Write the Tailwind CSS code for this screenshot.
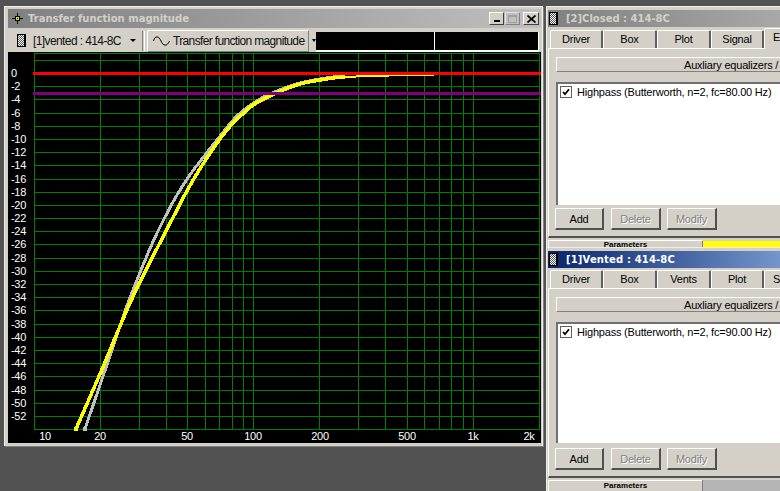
<!DOCTYPE html>
<html lang="en">
<head>
    <meta charset="UTF-8">
    <title>Transfer function magnitude</title>
    <script src="https://cdn.jsdelivr.net/npm/@tailwindcss/browser@4"></script>
</head>
<body class="relative w-[780px] h-[491px] overflow-hidden bg-[#525252] font-['Liberation_Sans',Arial,sans-serif] text-[11px] tracking-[-0.2px] leading-none text-black">

<!-- graph window -->
<div class="absolute left-[4px] top-[6px] w-[539px] h-[440px] flex flex-col bg-[#d4d0c8] pt-[2px] pl-[3px] pr-[1px] border-t border-l border-r border-[#f0eee8] shadow-[1px_1px_0_#808080]">
    <div class="h-[19px] flex items-center bg-gradient-to-r from-[#808080] to-[#c0c0c0]">
        <svg class="ml-[4px] w-[11px] h-[11px] shrink-0" viewBox="0 0 11 11" shape-rendering="crispEdges"><path d="M5 0h1v11H5zM0 5h11v1H0z" fill="#000"/><path d="M3 3h5v5H3z" fill="#000"/><path d="M4 4h3v3H4z" fill="#e8e800"/><path d="M5 5h1v1H5z" fill="#000"/></svg>
        <span class="ml-[5px] font-['DejaVu_Sans',sans-serif] font-bold text-[10px] tracking-normal text-[#d4d0c8]">Transfer function magnitude</span>
        <div class="ml-auto mr-[2px] flex">
            <div class="w-[15px] h-[13px] flex items-end justify-center pb-[2px] bg-[#d4d0c8] border-t border-l border-white border-r-[#404040] border-b-[#404040] border-r border-b"><div class="w-[6px] h-[2px] bg-black"></div></div>
            <div class="ml-[1px] w-[15px] h-[13px] flex items-center justify-center bg-[#c0c0c0] border-t border-l border-[#e0e0e0] border-r-[#808080] border-b-[#808080] border-r border-b"><div class="w-[9px] h-[8px] border border-t-2 border-[#a0a0a0]"></div></div>
            <div class="ml-[3px] w-[16px] h-[13px] flex items-center justify-center bg-[#d4d0c8] border-t border-l border-white border-r-[#404040] border-b-[#404040] border-r border-b">
                <svg class="w-[9px] h-[8px]" viewBox="0 0 9 8"><path d="M0.5 0.5L8.5 7.5M8.5 0.5L0.5 7.5" stroke="#000" stroke-width="1.7"/></svg>
            </div>
        </div>
    </div>
    <div class="h-[23px] mt-[1px] flex items-center text-[#111]">
        <svg class="ml-[9px] w-[9px] h-[13px] shrink-0" viewBox="0 0 9 13" shape-rendering="crispEdges">
            <defs><pattern id="chk1" width="2" height="2" patternUnits="userSpaceOnUse"><rect width="2" height="2" fill="#fff"/><rect width="1" height="1" fill="#555"/><rect x="1" y="1" width="1" height="1" fill="#555"/></pattern></defs>
            <rect width="9" height="13" fill="#000"/><rect x="1" y="1" width="6" height="11" fill="url(#chk1)"/>
        </svg>
        <span class="ml-[7px] w-[91px] text-[12px] tracking-[-0.6px] whitespace-nowrap">[1]vented : 414-8C</span>
        <div class="ml-[6px] w-0 h-0 border-x-[3px] border-x-transparent border-t-[3px] border-t-black"></div>
        <div class="ml-[6px] w-[3px] h-[20px] border-l border-r border-l-[#808080] border-r-white"></div>
        <div class="ml-[2px] w-[162px] h-[22px] flex items-center border-t border-l border-white border-r border-b border-r-[#808080] border-b-[#808080]">
            <svg class="ml-[5px] w-[17px] h-[10px] shrink-0" viewBox="0 0 17 10"><path d="M0.5 5C2 -1 6 0 8 5S14 11 16.5 5" fill="none" stroke="#000"/></svg>
            <span class="ml-[3px] text-[12px] tracking-[-0.65px] whitespace-nowrap">Transfer function magnitude</span>
        </div>
        <div class="ml-[3px] w-0 h-0 border-x-[2px] border-x-transparent border-t-[3px] border-t-black"></div>
        <div class="mt-[3px] flex-1 h-[20px] mr-[2px] flex bg-black border-r border-b-2 border-white">
            <div class="w-[119px] border-r border-white"></div>
        </div>
    </div>
    <svg id="plot" class="block w-[533px] h-[391px] shrink-0 bg-black" viewBox="8 52 533 391" font-size="11" letter-spacing="-0.3" fill="#fff">
        <path id="grid" fill="none" stroke="#008000" shape-rendering="crispEdges"/>
        <g id="labels"></g>
        <g shape-rendering="crispEdges" fill="none" stroke-linejoin="round">
            <rect x="83" y="427" width="4" height="4" fill="#c0c0c0"/>
            <rect x="74" y="427" width="4" height="4" fill="#ff0"/>
            <path id="gray" stroke="#c0c0c0" stroke-width="3"/>
            <path id="yellow" stroke="#ff0" stroke-width="3.5"/>
            <polyline stroke="#ff0" stroke-width="2" points="345,77 367,76 389,76"/>
            <polyline stroke="#ff0" stroke-width="1" points="389,75.5 434,75.5"/>
            <rect x="33" y="72" width="508" height="3" fill="#f00"/>
            <rect x="33" y="92" width="508" height="3" fill="#800080"/>
        </g>
    </svg>
</div>

<!-- closed box window -->
<div class="absolute left-[546px] top-[6px] w-[234px] h-[241px] overflow-hidden bg-[#d4d0c8] pt-[3px] pl-[1px] border-t border-l border-[#f0eee8]">
    <div class="h-[17px] flex items-center bg-gradient-to-r from-[#808080] to-[#a8a8a8]">
        <svg class="w-[9px] h-[13px] ml-[1px] shrink-0" viewBox="0 0 9 13" shape-rendering="crispEdges">
            <rect width="9" height="13" fill="#000"/><rect x="1" y="1" width="6" height="11" fill="url(#chk1)"/>
        </svg>
        <span class="ml-[8px] font-['DejaVu_Sans',sans-serif] font-bold text-[10px] tracking-normal text-[#d4d0c8] whitespace-nowrap">[2]Closed : 414-8C</span>
    </div>
    <div class="h-[21px] flex items-end pl-[2px]">
        <div class="w-[53px] h-[18px] shrink-0 flex items-center justify-center rounded-t-[2px] border-t border-l border-white border-r-2 border-r-[#606060]">Driver</div>
        <div class="w-[54px] h-[18px] shrink-0 flex items-center justify-center rounded-t-[2px] border-t border-l border-white border-r-2 border-r-[#606060]">Box</div>
        <div class="w-[54px] h-[18px] shrink-0 flex items-center justify-center rounded-t-[2px] border-t border-l border-white border-r-2 border-r-[#606060]">Plot</div>
        <div class="w-[53px] h-[18px] shrink-0 flex items-center justify-center rounded-t-[2px] border-t border-l border-white border-r-2 border-r-[#606060]">Signal</div>
        <div class="relative z-10 w-[60px] h-[21px] shrink-0 -mb-[1px] flex items-center pl-[8px] pb-[3px] rounded-t-[2px] border-t border-l border-white bg-[#d4d0c8]">EQ</div>
    </div>
    <div class="h-[190px] border-t border-l border-white border-b-2 border-b-[#505050] pl-[7px]">
        <div class="mt-[8px] h-[15px] pl-[127px] pt-[2px] flex items-center whitespace-nowrap border-t border-l border-white border-b border-b-[#808080]">Auxliary equalizers /</div>
        <div class="mt-[10px] h-[123px] bg-white border-t-2 border-l-2 border-[#707070] pl-[2px] pt-[2px] flex items-start">
            <div class="w-[12px] h-[12px] bg-white border border-[#606060] flex items-center justify-center">
                <svg class="w-[8px] h-[8px]" viewBox="0 0 8 8"><path d="M1 4L3 6.2L7 1.2" fill="none" stroke="#000" stroke-width="1.8"/></svg>
            </div>
            <span class="ml-[5px] mt-[1px] whitespace-nowrap">Highpass (Butterworth, n=2, fc=80.00 Hz)</span>
        </div>
        <div class="mt-[3px] flex -ml-[1px]">
            <div class="w-[49px] h-[22px] pt-[2px] flex items-center justify-center border-t border-l border-white border-r-2 border-b-2 border-r-[#505050] border-b-[#505050]">Add</div>
            <div class="ml-[7px] w-[50px] h-[22px] pt-[2px] flex items-center justify-center text-[#808080] [text-shadow:1px_1px_0_#fff] border-t border-l border-white border-r-2 border-b-2 border-r-[#505050] border-b-[#505050]">Delete</div>
            <div class="ml-[6px] w-[50px] h-[22px] pt-[2px] flex items-center justify-center text-[#808080] [text-shadow:1px_1px_0_#fff] border-t border-l border-white border-r-2 border-b-2 border-r-[#505050] border-b-[#505050]">Modify</div>
        </div>
    </div>
    <div class="mt-[2px] h-[8px] flex overflow-hidden">
        <div class="w-[154px] text-center font-bold text-[8px] tracking-normal border-t border-l border-white">Parameters</div>
        <div class="flex-1 mt-[1px] bg-[#ff0] border-l border-[#808080]"></div>
    </div>
</div>

<!-- vented box window (active) -->
<div class="absolute left-[546px] top-[247px] w-[234px] h-[244px] overflow-hidden bg-[#d4d0c8] pt-[3px] pl-[1px] border-t border-l border-[#f0eee8]">
    <div class="h-[17px] flex items-center bg-gradient-to-r from-[#0a246a] to-[#7596cb]">
        <svg class="w-[9px] h-[13px] ml-[1px] shrink-0" viewBox="0 0 9 13" shape-rendering="crispEdges">
            <rect width="9" height="13" fill="#000"/><rect x="1" y="1" width="6" height="11" fill="url(#chk1)"/>
        </svg>
        <span class="ml-[8px] font-['DejaVu_Sans',sans-serif] font-bold text-[10px] tracking-[0.15px] text-white whitespace-nowrap">[1]Vented : 414-8C</span>
    </div>
    <div class="h-[20px] flex items-end pl-[2px]">
        <div class="w-[53px] h-[18px] shrink-0 flex items-center justify-center rounded-t-[2px] border-t border-l border-white border-r-2 border-r-[#606060]">Driver</div>
        <div class="w-[54px] h-[18px] shrink-0 flex items-center justify-center rounded-t-[2px] border-t border-l border-white border-r-2 border-r-[#606060]">Box</div>
        <div class="w-[54px] h-[18px] shrink-0 flex items-center justify-center rounded-t-[2px] border-t border-l border-white border-r-2 border-r-[#606060]">Vents</div>
        <div class="w-[53px] h-[18px] shrink-0 flex items-center justify-center rounded-t-[2px] border-t border-l border-white border-r-2 border-r-[#606060]">Plot</div>
        <div class="w-[60px] h-[18px] shrink-0 flex items-center pl-[8px] rounded-t-[2px] border-t border-l border-white">Signal</div>
    </div>
    <div class="h-[190px] border-t border-l border-white border-b-2 border-b-[#505050] pl-[7px]">
        <div class="mt-[8px] h-[15px] pl-[127px] pt-[2px] flex items-center whitespace-nowrap border-t border-l border-white border-b border-b-[#808080]">Auxliary equalizers /</div>
        <div class="mt-[10px] h-[121px] bg-white border-t-2 border-l-2 border-[#707070] pl-[2px] pt-[2px] flex items-start">
            <div class="w-[12px] h-[12px] bg-white border border-[#606060] flex items-center justify-center">
                <svg class="w-[8px] h-[8px]" viewBox="0 0 8 8"><path d="M1 4L3 6.2L7 1.2" fill="none" stroke="#000" stroke-width="1.8"/></svg>
            </div>
            <span class="ml-[5px] mt-[1px] whitespace-nowrap">Highpass (Butterworth, n=2, fc=90.00 Hz)</span>
        </div>
        <div class="mt-[5px] flex -ml-[1px]">
            <div class="w-[49px] h-[22px] pt-[2px] flex items-center justify-center border-t border-l border-white border-r-2 border-b-2 border-r-[#505050] border-b-[#505050]">Add</div>
            <div class="ml-[7px] w-[50px] h-[22px] pt-[2px] flex items-center justify-center text-[#808080] [text-shadow:1px_1px_0_#fff] border-t border-l border-white border-r-2 border-b-2 border-r-[#505050] border-b-[#505050]">Delete</div>
            <div class="ml-[6px] w-[50px] h-[22px] pt-[2px] flex items-center justify-center text-[#808080] [text-shadow:1px_1px_0_#fff] border-t border-l border-white border-r-2 border-b-2 border-r-[#505050] border-b-[#505050]">Modify</div>
        </div>
    </div>
    <div class="mt-[2px] h-[12px] flex">
        <div class="w-[154px] text-center font-bold text-[8px] tracking-normal leading-[10px] border-t border-l border-white">Parameters</div>
        <div class="flex-1 bg-[#b4b4b4] border-l border-[#808080]"></div>
    </div>
</div>

<script>
    // grid and axis labels, in page coordinates (viewBox of the svg starts at 8,52)
    const freqs = [10,20,30,40,50,60,70,80,90,100,200,300,400,500,600,700,800,900,1000,2000]
    const fx = (f)=> Math.round(34 + 219.3*Math.log10(f/10))
    const dy = (d)=> Math.round(73 - 6.596*d)
    let d = ''
    freqs.forEach((f)=>{ d += `M${fx(f)+0.5} 53V429` })
    d += 'M34 53.5H540'
    for(let db=2; db>=-54; db-=2){ d += `M34 ${dy(db)+0.5}H540` }
    document.querySelector('#grid').setAttribute('d', d)

    const labels = document.querySelector('#labels')
    const addText = (x, y, s, anchor)=>{
        const t = document.createElementNS('http://www.w3.org/2000/svg', 'text')
        t.setAttribute('x', x)
        t.setAttribute('y', y)
        t.setAttribute('text-anchor', anchor)
        t.textContent = s
        labels.appendChild(t)
    }
    for(let db=0; db>=-52; db-=2){ addText(11, dy(db)+4, String(db), 'start') }
    const xs = [[45,'10'],[100,'20'],[187,'50'],[253,'100'],[320,'200'],[407,'500'],[473,'1k'],[529,'2k']]
    xs.forEach((v)=> addText(v[0], 440, v[1], 'middle'))

    // curves read off the plot, smoothed with catmull-rom
    const smooth = (p)=>{
        let s = `M${p[0][0]} ${p[0][1]}`
        for(let i=0; i<p.length-1; i++){
            const a = p[Math.max(i-1,0)], b = p[i], c = p[i+1], e = p[Math.min(i+2,p.length-1)]
            s += `C${b[0]+(c[0]-a[0])/6} ${b[1]+(c[1]-a[1])/6} ${c[0]-(e[0]-b[0])/6} ${c[1]-(e[1]-b[1])/6} ${c[0]} ${c[1]}`
        }
        return s
    }
    document.querySelector('#yellow').setAttribute('d', smooth([[76,429],[100,374],[115,338],[130,303],[145,272],[165,233],[188,189],[203,164],[217,143],[227,130],[237,119],[245,112],[253,105],[272,95],[300,84],[333,78],[345,77]]))
    document.querySelector('#gray').setAttribute('d', smooth([[85,429],[100,385],[115,341],[128,303],[141,270],[152,244],[163,221],[177,195],[192,172],[217,140],[236,117],[252,104],[270,94],[300,83],[333,77],[345,76]]))
</script>
</body>
</html>
